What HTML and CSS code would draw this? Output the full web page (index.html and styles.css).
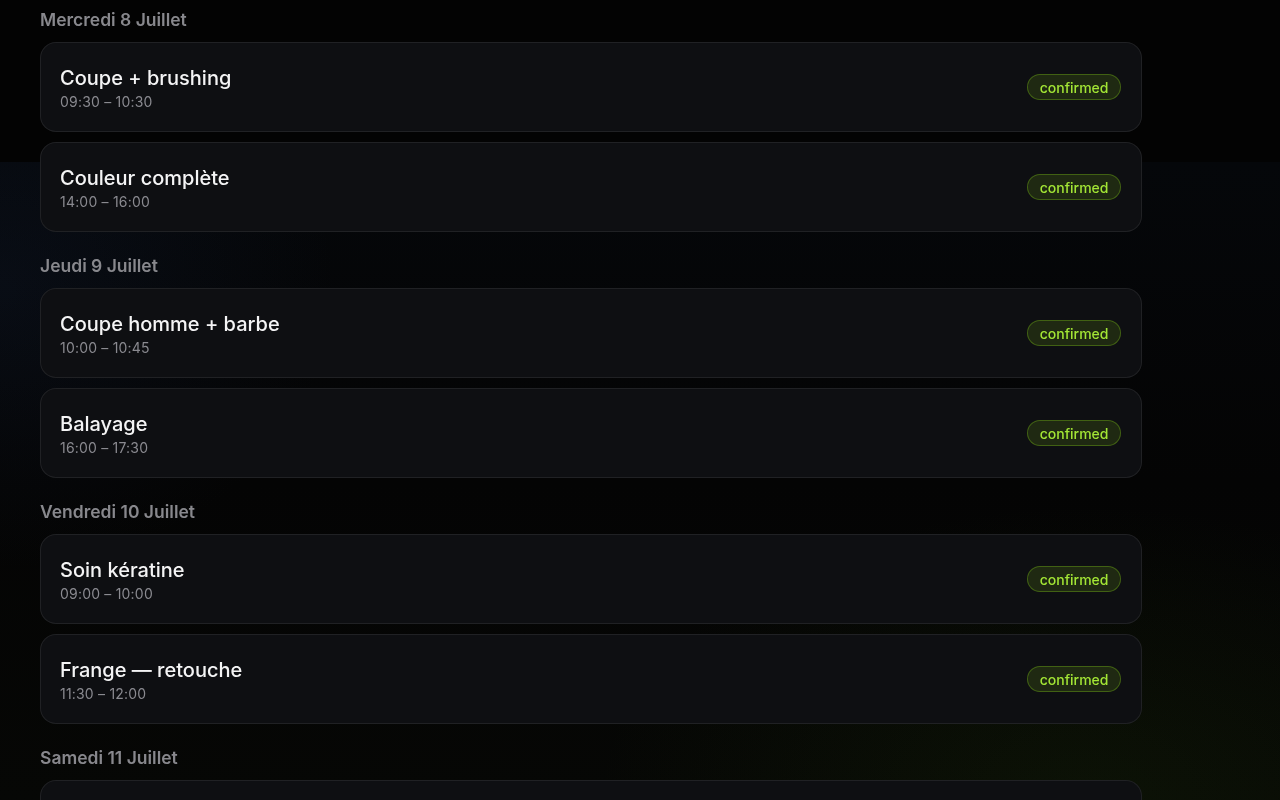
FILE: index.html
```html
<!DOCTYPE html>
<html lang="fr">
<head>
<meta charset="utf-8">
<title>Rendez-vous</title>
<link rel="stylesheet" href="styles.css">
</head>
<body>
<div class="glow" aria-hidden="true"></div>
<main class="agenda">
  <section class="day">
    <h2 class="day-title">Mercredi 8 Juillet</h2>
    <div class="list">
      <article class="appt">
        <div class="info"><h3 class="name">Coupe + brushing</h3><p class="time">09:30 – 10:30</p></div>
        <span class="badge">confirmed</span>
      </article>
      <article class="appt">
        <div class="info"><h3 class="name">Couleur complète</h3><p class="time">14:00 – 16:00</p></div>
        <span class="badge">confirmed</span>
      </article>
    </div>
  </section>
  <section class="day">
    <h2 class="day-title">Jeudi 9 Juillet</h2>
    <div class="list">
      <article class="appt">
        <div class="info"><h3 class="name">Coupe homme + barbe</h3><p class="time">10:00 – 10:45</p></div>
        <span class="badge">confirmed</span>
      </article>
      <article class="appt">
        <div class="info"><h3 class="name">Balayage</h3><p class="time">16:00 – 17:30</p></div>
        <span class="badge">confirmed</span>
      </article>
    </div>
  </section>
  <section class="day">
    <h2 class="day-title">Vendredi 10 Juillet</h2>
    <div class="list">
      <article class="appt">
        <div class="info"><h3 class="name">Soin kératine</h3><p class="time">09:00 – 10:00</p></div>
        <span class="badge">confirmed</span>
      </article>
      <article class="appt">
        <div class="info"><h3 class="name">Frange — retouche</h3><p class="time">11:30 – 12:00</p></div>
        <span class="badge">confirmed</span>
      </article>
    </div>
  </section>
  <section class="day">
    <h2 class="day-title">Samedi 11 Juillet</h2>
    <div class="list">
      <article class="appt appt-empty"></article>
    </div>
  </section>
</main>
</body>
</html>
```

FILE: styles.css
```css
html, body {
  margin: 0;
  padding: 0;
}

body {
  background: #030303;
  color: #f4f4f5;
  font-family: Inter, "Noto Sans", "Liberation Sans", sans-serif;
  height: 800px;
  overflow: hidden;
}

.glow {
  position: fixed;
  left: 0;
  right: 0;
  top: 162px;
  bottom: 0;
  z-index: -1;
  background:
    radial-gradient(ellipse 480px 400px at 0% 20%, rgba(30, 50, 90, 0.16), transparent 70%),
    radial-gradient(ellipse 700px 420px at 85% 100%, rgba(40, 70, 10, 0.18), transparent 70%),
    linear-gradient(180deg, #05070a 0%, #040404 50%, #060705 100%);
}

.agenda {
  width: 1102px;
  margin-left: 40px;
  padding-top: 10px;
  display: flex;
  flex-direction: column;
  gap: 24px;
}

.day {
  display: flex;
  flex-direction: column;
  gap: 12px;
}

.day-title {
  margin: 0;
  font-size: 17.5px;
  line-height: 20px;
  font-weight: 600;
  color: #88888d;
}

.list {
  display: flex;
  flex-direction: column;
  gap: 10px;
}

.appt {
  display: flex;
  align-items: center;
  justify-content: space-between;
  padding: 21px 20px 19px 19px;
  background: #0e0f12;
  border: 1px solid rgba(255, 255, 255, 0.08);
  border-radius: 16px;
}

.appt-empty {
  height: 48px;
}

.info {
  display: flex;
  flex-direction: column;
}

.name {
  margin: 0;
  font-size: 20px;
  line-height: 28px;
  font-weight: 500;
  color: #f4f4f5;
}

.time {
  margin: 0;
  font-size: 14px;
  line-height: 20px;
  letter-spacing: 0.2px;
  color: #8a8a90;
}

.badge {
  display: inline-flex;
  align-items: center;
  height: 26px;
  margin-top: -2px;
  box-sizing: border-box;
  padding: 0 11.5px;
  border-radius: 999px;
  background: rgba(132, 204, 22, 0.14);
  border: 1px solid rgba(132, 204, 22, 0.35);
  color: #a3e635;
  font-size: 14px;
  font-weight: 500;
}
```
